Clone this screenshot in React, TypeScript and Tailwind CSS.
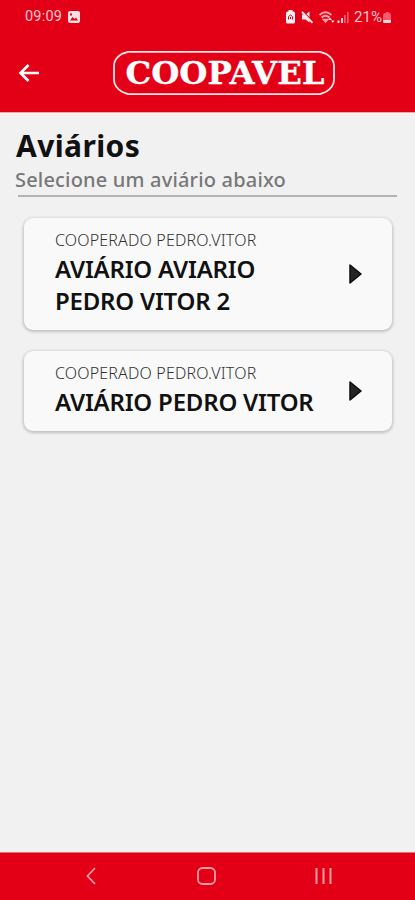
const FARMS = [
  { id: 1, owner: "COOPERADO PEDRO.VITOR", lines: ["AVIÁRIO AVIARIO", "PEDRO VITOR 2"] },
  { id: 2, owner: "COOPERADO PEDRO.VITOR", lines: ["AVIÁRIO PEDRO VITOR"] },
];

function StatusBar() {
  return (
    <div className="flex h-[33px] items-center justify-between pl-[25px] pr-[23px] font-['Roboto',sans-serif] text-[14.5px] text-[#ffc9cc]">
      <div className="flex items-center gap-[5px]">
        <span className="w-[38px] whitespace-nowrap tracking-[0.2px]">09:09</span>
        <svg width="12" height="12" viewBox="0 0 12 12">
          <rect width="12" height="12" rx="2" fill="#ffe1e3" />
          <path d="M2 9.5 4.5 6l2 2L8 6.5l2 3z" fill="#e30016" />
          <rect x="2" y="2.5" width="2" height="2" fill="#e30016" />
        </svg>
      </div>
      <svg width="107" height="16" viewBox="0 0 107 16">
        {/* battery saver */}
        <path d="M2.500 2.500h1V1h4v1.500h1q1.500 0 1.500 1.500v9q0 1.500-1.500 1.500h-6Q1 14.500 1 13V4q0-1.500 1.500-1.500z" fill="#fff0f1" />
        <path d="M3.500 10.500V7.500l2-1.500 2 1.500v3M5.500 8v2" fill="none" stroke="#e30016" strokeWidth="1" />
        {/* muted speaker */}
        <path d="M17 5.500h3.500l4-3v11l-4-3H17z" fill="#ffe8ea" />
        <path d="m17 1.500 11 11" stroke="#e30016" strokeWidth="1.500" />
        <path d="m17 2.800 10.500 11" stroke="#ffe8ea" strokeWidth="1.800" />
        {/* wifi */}
        <g fill="none" stroke="#ffa1a7" strokeWidth="1.700">
          <path d="M34.500 6q6-5.500 12 0M36.500 8.500q4-3.500 8 0" />
          <path d="m38.500 10.500 2 2.500 2-2.500z" fill="#ffa1a7" />
        </g>
        <path d="m43 11 2-2.500 2 2.500zm3 .5h3.500L47.800 14z" fill="#ffd5d8" />
        {/* signal */}
        <rect x="52.500" y="11.500" width="2" height="2.500" fill="#ffd5d8" />
        <rect x="56" y="9" width="2" height="5" fill="#ffd5d8" />
        <rect x="59" y="6" width="1.700" height="8" fill="#f55c69" />
        <rect x="62" y="3" width="1.700" height="11" fill="#f55c69" />
        <text x="69" y="13" fontSize="14.500" textLength="28" lengthAdjust="spacingAndGlyphs" fill="#ffc9cc">
          21%
        </text>
        <path d="M101 3h3v1q2 0 2 2v5h-8V6q0-2 3-2z" fill="#f55c69" />
        <path d="M98 11h8v2q0 1-1 1h-6q-1 0-1-1z" fill="#ffd5d8" />
      </svg>
    </div>
  );
}

function Logo() {
  return (
    <svg width="222" height="44" viewBox="0 0 222 44" className="font-['DejaVu_Serif',serif]">
      <path
        d="M15 .8h192l6 2q8 5 8 12v14q0 7-8 12l-6 2.400H15l-6-2.400q-8-5-8-12v-14q0-7 8-12z"
        fill="none"
        stroke="#ffe3e5"
        strokeWidth="1.800"
      />
      <text
        x="12.500"
        y="33"
        fontSize="32"
        fontWeight="bold"
        fill="#fff"
        stroke="#fff"
        strokeWidth="0.300"
        textLength="199"
        lengthAdjust="spacingAndGlyphs"
      >
        COOPAVEL
      </text>
    </svg>
  );
}

export default function App() {
  return (
    <div className="flex h-[900px] w-[415px] flex-col bg-[#f1f1f1] font-['Noto_Sans',sans-serif] text-[#111]">
      <header className="h-[113px] shrink-0 border-b border-[#f3a5ab] bg-[#e30016]">
        <StatusBar />
        <div className="flex h-20 items-center pl-[18px]">
          <button aria-label="Voltar" className="mr-[73px]">
            <svg width="22" height="18" viewBox="0 0 22 18" fill="none" stroke="#fff" strokeWidth="2.600">
              <path d="M21 9H2M10.500 1 2.500 9l8 8" />
            </svg>
          </button>
          <Logo />
        </div>
      </header>

      <main className="flex-1">
        <div className="ml-[18px] mr-[18px] h-[84px] border-b-2 border-[#b4b4b4] pt-[13px]">
          <h1 className="-ml-[2px] text-[30px] leading-[40px] font-bold tracking-[0.4px]">Aviários</h1>
          <p className="-ml-[3px] text-[20px] leading-[27px] font-medium tracking-[0.18px] text-[#777]">
            Selecione um aviário abaixo
          </p>
        </div>

        <ul className="mt-[21px] flex flex-col gap-[21px] pl-6 pr-[23px]">
          {FARMS.map((farm) => (
            <li
              key={farm.id}
              className="flex items-center rounded-[9px] bg-[#f9f9f9] pt-[10px] pb-[13px] pl-[31px] pr-[30px] shadow-[0_1px_3px_1px_rgba(0,0,0,0.2)]"
            >
              <div className="flex-1 whitespace-nowrap">
                <p className="text-[16px] leading-[25px] font-light tracking-[0.17px] text-[#333]">{farm.owner}</p>
                <h2 className="text-[24px] leading-[32px] font-semibold tracking-[-0.21px]">
                  {farm.lines.map((line) => (
                    <span key={line} className="block">
                      {line}
                    </span>
                  ))}
                </h2>
              </div>
              <svg width="13" height="20" viewBox="0 0 13 20" className="mt-[2px]">
                <path d="M1 1v18L12 10z" fill="#252525" stroke="#0c0c0c" strokeWidth="1.500" strokeLinejoin="round" />
              </svg>
            </li>
          ))}
        </ul>
      </main>

      <nav className="flex h-12 items-center justify-between border-t border-[#d97780] bg-[#e30016] pb-px pl-[86px] pr-[83px]">
        <svg width="10" height="18" viewBox="0 0 10 18" fill="none" stroke="#ff9ba3" strokeWidth="1.800">
          <path d="M9 1 1.500 9 9 17" />
        </svg>
        <svg width="19" height="18" viewBox="0 0 19 18" fill="none" stroke="#ff9ba3" strokeWidth="1.800" className="ml-[2px]">
          <rect x="1" y="1" width="17" height="16" rx="4.500" />
        </svg>
        <svg width="17" height="18" viewBox="0 0 17 18" stroke="#ff9ba3" strokeWidth="2">
          <path d="M1.500 1v16M8.500 1v16M15.500 1v16" />
        </svg>
      </nav>
    </div>
  );
}
